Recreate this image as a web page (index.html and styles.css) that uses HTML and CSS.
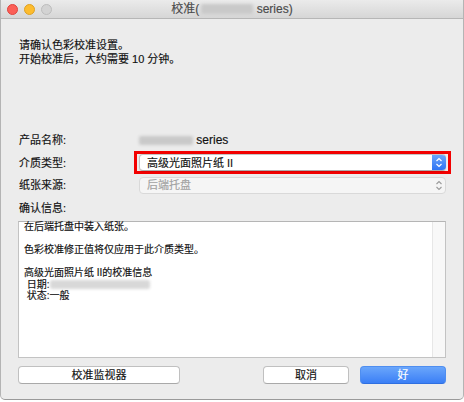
FILE: index.html
```html
<!DOCTYPE html>
<html lang="zh">
<head>
<meta charset="utf-8">
<title>校准</title>
<link rel="stylesheet" href="styles.css">
</head>
<body>
<div class="window">
  <div class="titlebar">
    <div class="lights">
      <span class="light red"></span>
      <span class="light yellow"></span>
      <span class="light gray"></span>
    </div>
    <div class="title">校准(<span class="blur blur-title"></span> series)</div>
    <div></div>
  </div>
  <div class="content">
    <div class="intro">
      <p>请确认色彩校准设置。</p>
      <p>开始校准后，大约需要 10 分钟。</p>
    </div>
    <div class="form">
      <div class="label">产品名称:</div>
      <div class="value"><span class="blur blur-name"></span> series</div>

      <div class="label">介质类型:</div>
      <div class="highlight">
        <div class="select">
          <span class="select-text">高级光面照片纸 II</span>
          <span class="stepper">
            <svg width="8" height="11" viewBox="0 0 8 11"><path d="M1.5 4 L4 1.5 L6.5 4 M1.5 7 L4 9.5 L6.5 7" fill="none" stroke="#fff" stroke-width="1.2"/></svg>
          </span>
        </div>
      </div>

      <div class="label">纸张来源:</div>
      <div class="select disabled">
        <span class="select-text">后端托盘</span>
        <span class="stepper plain">
          <svg width="8" height="11" viewBox="0 0 8 11"><path d="M1.5 4 L4 1.5 L6.5 4 M1.5 7 L4 9.5 L6.5 7" fill="none" stroke="#9a9a9a" stroke-width="1.1"/></svg>
        </span>
      </div>
    </div>
    <div class="label info-label">确认信息:</div>
    <div class="textbox">
      <div class="text"><p>在后端托盘中装入纸张。</p><p>色彩校准修正值将仅应用于此介质类型。</p><p>高级光面照片纸 II的校准信息<br>&nbsp;日期:<span class="blur blur-date"></span><br>&nbsp;状态:一般</p></div>
      <div class="track"></div>
    </div>
    <div class="buttons">
      <button class="btn btn-wide">校准监视器</button>
      <div class="spacer"></div>
      <button class="btn">取消</button>
      <button class="btn btn-primary">好</button>
    </div>
  </div>
</div>
</body>
</html>
```

FILE: styles.css
```css
* { box-sizing: border-box; }
html, body { margin: 0; padding: 0; background: #ffffff; }
body {
  width: 464px;
  height: 402px;
  font-family: "Liberation Sans", "Noto Sans CJK SC", sans-serif;
  font-size: 11px;
  color: #111111;
  -webkit-text-stroke: 0.15px currentColor;
}
p { margin: 0; }

.window {
  width: 464px;
  height: 400px;
  background: #ececec;
  border: 1px solid #b4b4b4;
  border-top: none;
  border-bottom-color: #9a9a9a;
  border-radius: 0 0 5px 5px;
  display: flex;
  flex-direction: column;
  overflow: hidden;
}

.titlebar {
  height: 19px;
  background: linear-gradient(#ebebeb, #d6d6d6);
  border-bottom: 1px solid #b6b6b6;
  display: grid;
  grid-template-columns: 1fr auto 1fr;
  align-items: center;
}
.lights { display: flex; gap: 6px; padding-left: 6px; }
.light {
  width: 11px; height: 11px; border-radius: 50%;
  display: block;
}
.red { background: #fc5f57; border: 0.5px solid #e0443e; }
.yellow { background: #fdbc2e; border: 0.5px solid #dea123; }
.gray { background: #d3d3d3; border: 0.5px solid #bdbdbd; }
.title {
  font-size: 12px;
  color: #4b4b4b;
  display: flex;
  align-items: center;
  white-space: pre;
  line-height: 14px;
}

.blur {
  display: inline-block;
  background: #c9c9c9;
  filter: blur(1.6px);
  border-radius: 2px;
}
.blur-title { width: 52px; height: 10px; margin-left: 2px; }
.blur-name { width: 54px; height: 9px; vertical-align: -1px; }
.blur-date { width: 100px; height: 9px; background: #d8d8d8; vertical-align: -1px; }

.content {
  padding: 19px 17px 0 17px;
  display: flex;
  flex-direction: column;
}
.intro { line-height: 14px; padding-left: 1px; }

.form {
  margin-top: 67px;
  display: grid;
  grid-template-columns: 121px 1fr;
  grid-template-rows: 14px 23px 17px;
  row-gap: 4px;
  align-items: center;
}
.label { line-height: 14px; padding-left: 1px; }
.value { font-size: 12px; line-height: 14px; }
.form > :nth-child(5) { margin-top: -3px; }
.form > :nth-child(6) { margin-top: -3px; }

.highlight {
  margin: 0 -5px;
  border: 3px solid #f20000;
  padding: 0 2px;
  height: 23px;
}

.select {
  height: 17px;
  background: #ffffff;
  border: 1px solid #c4c4c4;
  border-bottom-color: #acacac;
  border-radius: 4px;
  display: flex;
  align-items: center;
  box-shadow: 0 0.5px 1px rgba(0,0,0,0.08);
}
.select-text { flex: 1; padding-left: 7px; line-height: 14px; }
.stepper {
  width: 14px;
  height: 100%;
  margin-right: -1px;
  background: linear-gradient(#6aa5fb, #2f74f4);
  border-radius: 0 4px 4px 0;
  display: flex;
  align-items: center;
  justify-content: center;
}
.select.disabled {
  background: #f5f5f5;
  border-color: #d9d9d9;
  box-shadow: none;
}
.select.disabled .select-text { color: #a2a2a2; }
.stepper.plain { background: none; }

.info-label { margin-top: 6px; }

.textbox {
  margin-top: 6px;
  height: 137px;
  background: #ffffff;
  border: 1px solid #c3c3c3;
  border-top-color: #b5b5b5;
  display: flex;
}
.text {
  flex: 1;
  font-size: 10px;
  line-height: 11.5px;
  padding: 0 0 0 5px;
  margin-top: -1px;
  white-space: nowrap;
}
.text p { margin-bottom: 11.5px; }
.track {
  width: 13px;
  background: #f8f8f8;
  border-left: 1px solid #e7e7e7;
}

.buttons {
  margin-top: 8px;
  display: flex;
  gap: 11px;
}
.spacer { flex: 1; }
.btn {
  height: 18px;
  width: 86px;
  padding: 0;
  font-family: inherit;
  font-size: 11px;
  color: #111111;
  background: #ffffff;
  border: 1px solid #c0c0c0;
  border-bottom-color: #a9a9a9;
  border-radius: 4px;
  line-height: 14px;
  -webkit-text-stroke: 0.15px currentColor;
}
.btn-wide { width: 162px; }
.btn-primary {
  background: linear-gradient(#6aa6fb, #3b7ff6);
  border-color: #4f8ef0;
  border-bottom-color: #2f6fe0;
  color: #ffffff;
}
```
